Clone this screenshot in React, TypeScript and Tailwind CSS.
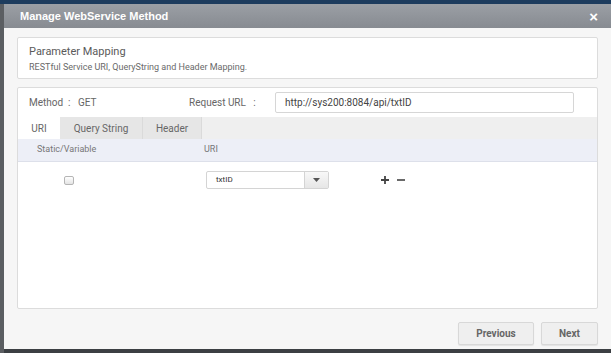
export default function App() {
  const tabs = ["URI", "Query String", "Header"];

  return (
    <div className="flex h-[353px] w-[611px] flex-col overflow-hidden bg-[#3c3f43] font-['Roboto',sans-serif]">
      {/* page behind the modal */}
      <div className="h-[4px] w-full shrink-0 bg-[#1d3c5e]" />
      <div className="flex min-h-0 flex-1">
        <div className="w-[4px] shrink-0 bg-[#5b5e62]" />

        {/* Modal */}
        <div className="mb-[4px] flex min-w-0 flex-1 flex-col bg-[#f6f6f6]">
          <div className="flex h-[24px] shrink-0 items-center justify-between bg-gradient-to-b from-[#9b9fa5] to-[#878b91] pl-[16px] pr-[13px]">
            <span className="font-['Liberation_Sans',sans-serif] text-[11px] font-bold text-white">
              Manage WebService Method
            </span>
            <span className="font-['Liberation_Sans',sans-serif] text-[15px] font-bold leading-none text-white">×</span>
          </div>

          <div className="flex flex-1 flex-col px-[13px] pt-[9px]">
            {/* Header panel */}
            <div className="flex h-[42px] flex-col justify-center gap-[3px] rounded-[2px] border border-[#dcdcdc] bg-white px-[11px]">
              <div className="text-[11px] leading-[14px] text-[#5a5a5a]">Parameter Mapping</div>
              <div className="text-[9px] leading-[10px] text-[#6a6a6a]">
                RESTful Service URI, QueryString and Header Mapping.
              </div>
            </div>

            {/* Main panel */}
            <div className="mt-[8px] flex h-[222px] flex-col rounded-[2px] border border-[#dcdcdc] bg-white">
              <div className="flex h-[29px] items-center pl-[11px] text-[10px] text-[#666]">
                <span className="w-[160px]">Method&nbsp;&nbsp;:&nbsp;&nbsp;&nbsp;GET</span>
                <span className="w-[86px]">Request URL&nbsp;&nbsp;&nbsp;:</span>
                <div className="flex h-[21px] w-[299px] items-center rounded-[2px] border border-[#d6d6d6] bg-white px-[9px] text-[10px] text-[#444]">
                  http://sys200:8084/api/txtID
                </div>
              </div>

              <div className="flex h-[22px] bg-[#efefef]">
                {tabs.map((t, i) => (
                  <div
                    key={t}
                    className={
                      i === 0
                        ? "flex w-[42px] items-center justify-center bg-white text-[10px] text-[#666]"
                        : i === 1
                          ? "flex w-[83px] items-center justify-center border-r border-[#dadada] bg-[#e6e6e6] text-[10px] text-[#666]"
                          : "flex w-[59px] items-center justify-center border-r border-[#dadada] bg-[#e6e6e6] text-[10px] text-[#666]"
                    }
                  >
                    {t}
                  </div>
                ))}
              </div>

              <div className="flex h-[23px] items-center border-b border-[#dde0ea] bg-[#edeff7] text-[9px] text-[#777]">
                <span className="w-[186px] pl-[19px]">Static/Variable</span>
                <span>URI</span>
              </div>

              <div className="flex h-[36px] items-center">
                <div className="flex w-[188px] pl-[46px]">
                  <div className="h-[9px] w-[10px] rounded-[2px] border border-[#b5b5b5] bg-gradient-to-b from-white to-[#e4e4e4]" />
                </div>
                <div className="flex h-[18px] w-[123px] rounded-[2px] border border-[#d4d4d4] bg-white">
                  <div className="flex flex-1 items-center pl-[9px] text-[8px] text-[#333]">txtID</div>
                  <div className="flex w-[24px] items-center justify-center border-l border-[#d4d4d4] bg-gradient-to-b from-[#f8f8f8] to-[#e6e6e6]">
                    <svg width="7" height="4" viewBox="0 0 7 4">
                      <path d="M0 0h7L3.5 4z" fill="#555" />
                    </svg>
                  </div>
                </div>
                <div className="ml-[52px] flex items-center gap-[8px]">
                  <svg width="8" height="8" viewBox="0 0 8 8">
                    <path d="M3.1 0h1.8v3.1H8v1.8H4.9V8H3.1V4.9H0V3.1h3.1z" fill="#444" />
                  </svg>
                  <svg width="8" height="8" viewBox="0 0 8 8">
                    <path d="M0 3.2h8v1.6H0z" fill="#444" />
                  </svg>
                </div>
              </div>
            </div>

            {/* Footer */}
            <div className="mt-[13px] flex justify-end gap-[7px]">
              <button className="h-[23px] w-[76px] rounded-[2px] border border-[#d8d8d8] bg-[#efefef] text-[10px] font-bold text-[#666] shadow-[0_1px_1px_rgba(0,0,0,0.08)]">
                Previous
              </button>
              <button className="h-[23px] w-[57px] rounded-[2px] border border-[#d8d8d8] bg-[#efefef] text-[10px] font-bold text-[#666] shadow-[0_1px_1px_rgba(0,0,0,0.08)]">
                Next
              </button>
            </div>
          </div>
        </div>
      </div>
    </div>
  );
}
